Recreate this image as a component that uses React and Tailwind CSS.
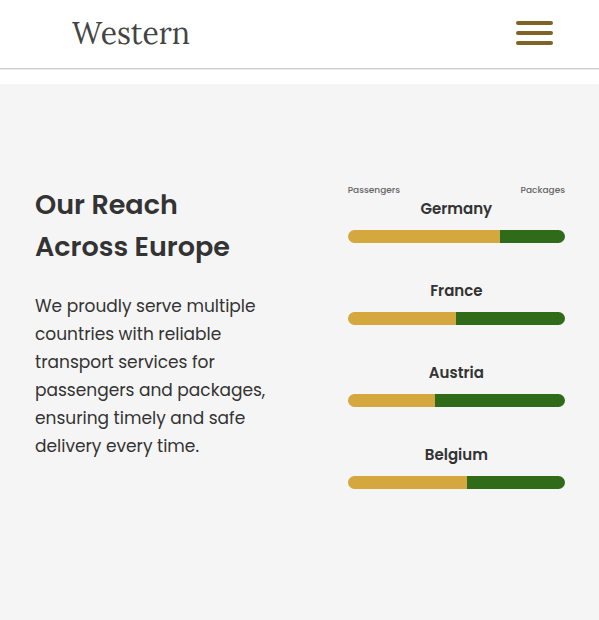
const routes = [
  { country: 'Germany', passengers: 70 },
  { country: 'France', passengers: 50 },
  { country: 'Austria', passengers: 40 },
  { country: 'Belgium', passengers: 55 },
];

function Header() {
  return (
    <header className="flex h-[69px] items-center justify-between border-b border-[#cccccc] bg-white pr-[46px] pb-0.5 pl-[72px] shadow-[0_1px_0_#ececec]">
      <a href="#" className="font-[Lora,'Liberation_Serif',serif] text-[30px] leading-10 text-[#444444]">
        Western
      </a>
      <button type="button" aria-label="Open menu" className="flex w-[37px] flex-col gap-1.5">
        <span className="h-1 w-full rounded-full bg-[#806326]" />
        <span className="h-1 w-full rounded-full bg-[#806326]" />
        <span className="h-1 w-full rounded-full bg-[#806326]" />
      </button>
    </header>
  );
}

function RouteBar({ country, passengers }) {
  return (
    <li className="flex flex-col gap-[9px]">
      <h3 className="text-center text-[15px] leading-6 font-semibold">{country}</h3>
      <div className="flex h-[13px]">
        <div className="rounded-l-full bg-[#d4a73f]" style={{ width: `${passengers}%` }} />
        <div className="grow rounded-r-full bg-[#2f6b19]" />
      </div>
    </li>
  );
}

export default function App() {
  return (
    <div className="flex min-h-screen flex-col bg-white font-[Poppins,Inter,'Liberation_Sans',sans-serif] text-[#333333]">
      <Header />
      <main className="mt-[15px] grow bg-[#f5f5f5] pt-[100px] pr-[34px] pb-24 pl-[35px]">
        <section className="flex justify-between gap-8">
          <div className="w-[242px] shrink-0">
            <h2 className="text-[27px] leading-[42px] font-semibold">
              Our Reach
              <br />
              Across Europe
            </h2>
            <p className="mt-6 text-[17px] leading-7">
              We proudly serve multiple countries with reliable transport services for passengers and
              packages, ensuring timely and safe delivery every time.
            </p>
          </div>
          <div className="w-[41%] shrink-0">
            <div className="flex justify-between text-[9px] leading-[13px] font-medium text-[#666666]">
              <span>Passengers</span>
              <span>Packages</span>
            </div>
            <ul className="flex flex-col gap-9">
              {routes.map((route) => (
                <RouteBar key={route.country} {...route} />
              ))}
            </ul>
          </div>
        </section>
      </main>
    </div>
  );
}
